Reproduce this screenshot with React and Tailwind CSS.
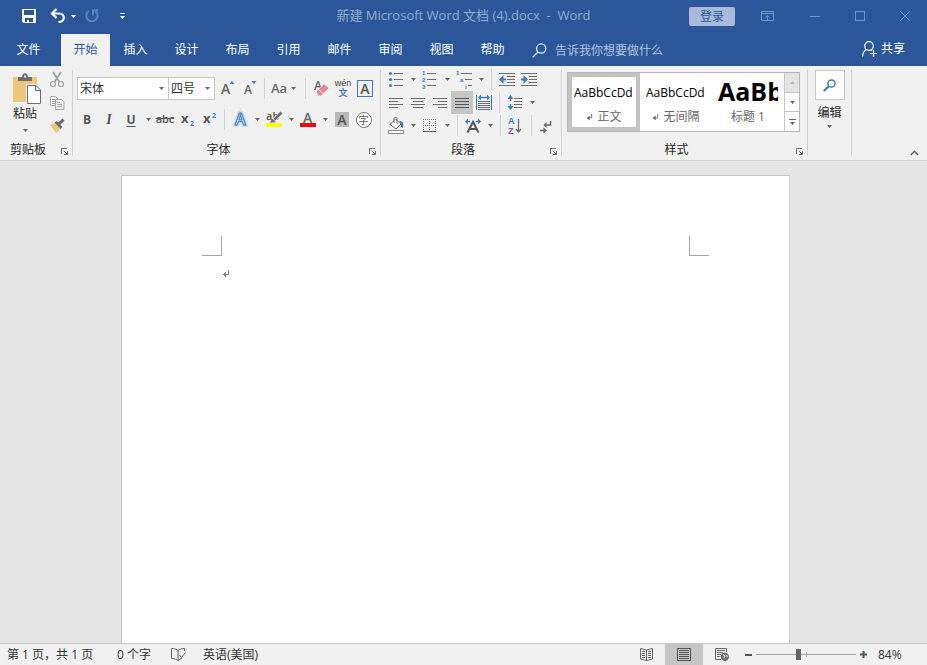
import React, { useState } from 'react';

const tabs = ['插入', '设计', '布局', '引用', '邮件', '审阅', '视图', '帮助'];

const Caret = () => (
  <svg className="w-[5px] h-[3px] shrink-0" viewBox="0 0 5 3" fill="currentColor">
    <path d="M0 0h5L2.5 3z" />
  </svg>
);

const Drop = ({ label }) => (
  <button type="button" aria-label={label} className="w-3 h-[23px] flex items-center justify-center text-[#666]">
    <Caret />
  </button>
);

const Tool = ({ label, active, children }) => (
  <button
    type="button"
    aria-label={label}
    title={label}
    className={`w-[22px] h-[23px] flex items-center justify-center shrink-0 ${active ? 'bg-[#c5c5c5]' : 'hover:bg-[#d5d5d5]'}`}
  >
    {children}
  </button>
);

const Icon = ({ children }) => (
  <svg className="w-4 h-[17px] overflow-visible" viewBox="0 0 16 17" fill="none">
    {children}
  </svg>
);

// horizontal rules given as [x, y, width]
const Lines = ({ rows, color = '#6d6d6d' }) => (
  <g fill={color} shapeRendering="crispEdges">
    {rows.map(([x, y, w]) => (
      <rect key={`${x}-${y}`} x={x} y={y} width={w} height="1" />
    ))}
  </g>
);

const Divider = () => <div className="w-px h-[21px] mx-1 bg-[#d2d2d2] shrink-0" />;

const GroupLine = () => <div className="w-px my-1 bg-[#d2d2d2] shrink-0" />;

const Launcher = ({ label }) => (
  <button type="button" aria-label={label} className="w-4 h-[23px] flex items-center justify-center pt-1.5">
    <svg className="w-[7px] h-[7px]" viewBox="0 0 7 7" stroke="#777" fill="none" shapeRendering="crispEdges">
      <path d="M0 .5h6M.5 0v6M3 3l3 3M6.5 3v4M3 6.5h4" />
    </svg>
  </button>
);

const Group = ({ label, className, children }) => (
  <section aria-label={label} className={`flex flex-col pt-0.5 shrink-0 ${className}`}>
    <div className="h-[69px]">{children}</div>
    <div className="h-[23px] flex items-center">
      <span className="flex-1 pt-0.5 text-center">{label}</span>
      <Launcher label={`${label}设置`} />
    </div>
  </section>
);

const ReturnMark = ({ className }) => (
  <svg className={className} viewBox="0 0 8 8" fill="none" stroke="currentColor">
    <path d="M6.5 0v4.5H1M3.5 2.5v4" />
    <path d="M4 2L1 4.5 4 7z" fill="currentColor" stroke="none" />
  </svg>
);

const TitleBar = () => (
  <header className="h-8 grid grid-cols-[1fr_auto_1fr] items-center">
    <div className="flex items-center gap-3 pl-[21px] text-white">
      <button type="button" aria-label="保存" className="w-4 h-6 flex items-center justify-center">
        <svg className="w-3.5 h-3.5" viewBox="0 0 14 14" fill="currentColor" shapeRendering="crispEdges">
          <path fillRule="evenodd" d="M0 0h14v14H1L0 13zM2 1v5h10V1zM3 9v4h2v-2h2v2h4V9z" />
        </svg>
      </button>
      <div className="flex items-center">
        <button type="button" aria-label="撤消" className="w-[18px] h-6 flex items-center justify-center">
          <svg className="w-4 h-4" viewBox="0 0 16 16" fill="none" stroke="currentColor" strokeWidth="2.2">
            <path d="M6.500 1L2 5.500 6.500 10M2.500 5.500H9c6.500 0 6.500 8.500-.5 8.500" />
          </svg>
        </button>
        <button type="button" aria-label="撤消列表" className="w-3 h-6 flex items-center justify-center">
          <Caret />
        </button>
        <button type="button" aria-label="恢复" className="w-[26px] h-6 flex items-center justify-center text-[#5f82b7]">
          <svg className="w-4 h-4" viewBox="0 0 16 16" fill="none" stroke="currentColor" strokeWidth="2">
            <path d="M5 3a5.600 5.600 0 1 0 6.500.5M9 7.500V2.200h5" />
          </svg>
        </button>
      </div>
      <button type="button" aria-label="自定义快速访问工具栏" className="w-2.5 h-6 flex items-center justify-center">
        <svg className="w-[7px] h-[7px]" viewBox="0 0 7 7" fill="currentColor">
          <path d="M1 0h5v1H1zM1 3h5L3.500 6z" />
        </svg>
      </button>
    </div>
    <h1 className="text-[13px] text-[#94add3] whitespace-pre">新建 Microsoft Word 文档 (4).docx  -  Word</h1>
    <div className="flex items-center justify-end text-[#7794c4]">
      <button type="button" className="w-[46px] h-[19px] mr-3 rounded-xs bg-[#a9bbd9] text-[#2b579a] leading-[19px]">
        登录
      </button>
      <button type="button" aria-label="功能区显示选项" className="w-[45px] h-8 pr-1 flex items-center justify-center">
        <svg className="w-[13px] h-[11px]" viewBox="0 0 13 11" fill="none" stroke="currentColor">
          <path d="M.5.5h12v9H.5zM0 2.500h13M6.500 9V4.500M4.500 6.500l2-2 2 2" />
        </svg>
      </button>
      <button type="button" aria-label="最小化" className="w-[45px] h-8 flex items-center justify-center">
        <span className="w-2.5 h-px bg-current" />
      </button>
      <button type="button" aria-label="最大化" className="w-[45px] h-8 flex items-center justify-center">
        <span className="w-2.5 h-2.5 border border-current" />
      </button>
      <button type="button" aria-label="关闭" className="w-[45px] h-8 flex items-center justify-center">
        <svg className="w-2.5 h-2.5" viewBox="0 0 10 10" stroke="currentColor">
          <path d="M0 0l10 10M10 0L0 10" />
        </svg>
      </button>
    </div>
  </header>
);

const TabBar = () => (
  <nav className="h-[34px] flex items-end text-white">
    <button type="button" className="w-[61px] h-8 pr-1">文件</button>
    <button type="button" className="w-[49px] h-8 bg-[#f1f1f1] text-[#2b579a]">开始</button>
    {tabs.map((tab) => (
      <button key={tab} type="button" className="w-[51px] h-8">{tab}</button>
    ))}
    <label className="h-8 pl-3.5 flex items-center gap-2">
      <svg className="w-[15px] h-[15px]" viewBox="0 0 15 15" fill="none" stroke="#dfe7f3" strokeWidth="1.3">
        <circle cx="9.200" cy="5.500" r="4.600" />
        <path d="M6 9L.7 14.300" />
      </svg>
      <input
        type="text"
        aria-label="操作说明搜索"
        placeholder="告诉我你想要做什么"
        className="w-[120px] h-6 bg-transparent outline-none placeholder:text-[#b3c4e0]"
      />
    </label>
    <button type="button" className="ml-auto mr-[22px] h-8 pb-0.5 flex items-center gap-1">
      <svg className="w-[15px] h-4" viewBox="0 0 15 16" fill="none" stroke="currentColor" strokeWidth="1.2">
        <circle cx="7" cy="5" r="4.300" />
        <path d="M4.500 8.600C2 10 .8 12 .6 15.500M9 8.800l1 .7M11.500 9v7M8 12.500h7" />
      </svg>
      共享
    </button>
  </nav>
);

const Clipboard = () => (
  <Group label="剪贴板" className="w-[72px]">
    <div className="flex">
      <button type="button" className="w-[46px] h-[69px] pt-[5px] pl-2 flex flex-col items-center">
        <svg className="w-7 h-[31px] shrink-0" viewBox="0 0 28 31" fill="none">
          <path d="M0 4h24v25H0z" fill="#eec77f" />
          <path d="M5 8V4h4c0-5 6-5 6 0h4v4z" fill="#6d6d6d" />
          <rect x="11" y="2.500" width="2" height="2" fill="#f1f1f1" />
          <path d="M13 11h11v4h4v16H13z" fill="#f1f1f1" />
          <path d="M14.500 12.500h8.500l4.500 4.500v13.500h-13z" fill="#fff" stroke="#6d6d6d" />
          <path d="M22.500 12.500v5h5" stroke="#6d6d6d" />
        </svg>
        <span className="h-[19px] leading-[19px] pr-1">粘贴</span>
        <span className="h-2.5 pr-1 flex items-center pt-1 text-[#666]"><Caret /></span>
      </button>
      <div>
        <Tool label="剪切">
          <Icon>
            <g stroke="#a0a0a0" strokeWidth="1.2">
              <circle cx="4" cy="13" r="2.500" />
              <circle cx="12" cy="13" r="2.500" />
              <path d="M4 1l6.500 10M12 1L5.500 11" strokeWidth="1.800" />
            </g>
          </Icon>
        </Tool>
        <Tool label="复制">
          <Icon>
            <g stroke="#a8a8a8" fill="#f1f1f1">
              <path d="M1.500 2.500h5l2 2v7h-7z" />
              <path d="M3 5.500h3M3 7.500h3M3 9.500h3" />
              <path d="M6.500 5.500h6l2.500 2.500v7.500H6.500z" />
              <path d="M8 8.500h3M8 10.500h5M8 12.500h5" />
            </g>
          </Icon>
        </Tool>
        <Tool label="格式刷">
          <Icon>
            <path d="M1 8l5-2 6 6-5 4z" fill="#eec77f" />
            <path d="M5.500 5.500l2-1.500 6 6-2 2z" fill="#6d6d6d" />
            <path d="M10 7l4.500-4.500" stroke="#6d6d6d" strokeWidth="3" />
          </Icon>
        </Tool>
      </div>
    </div>
  </Group>
);

const Combo = ({ label, className, options }) => (
  <div className={`relative ${className}`}>
    <select
      aria-label={label}
      className="appearance-none w-full h-[23px] pl-0.5 bg-white border border-[#c6c6c6] text-[#333] outline-none"
    >
      {options.map((o) => (
        <option key={o}>{o}</option>
      ))}
    </select>
    <span className="absolute right-[5px] top-2.5 text-[#666] pointer-events-none"><Caret /></span>
  </div>
);

const FontGroup = () => (
  <Group label="字体" className="w-[307px]">
    <div className="pt-[9px] pl-[3px] flex flex-col gap-2 text-[#555]">
      <div className="flex items-center">
        <div className="w-[140px] px-px flex">
          <Combo label="字体" className="w-[92px]" options={['宋体', '黑体', '楷体']} />
          <Combo label="字号" className="w-[47px] -ml-px" options={['四号', '小四', '五号']} />
        </div>
        <Tool label="增大字号">
          <Icon>
            <text x="2" y="14" fontSize="14" fontWeight="600" fill="#666">A</text>
            <path d="M10.500 4h5L13 1z" fill="#3f7ab8" />
          </Icon>
        </Tool>
        <Tool label="减小字号">
          <Icon>
            <text x="3" y="14" fontSize="12" fontWeight="600" fill="#666">A</text>
            <path d="M10.500 1h5L13 4z" fill="#3f7ab8" />
          </Icon>
        </Tool>
        <Divider />
        <button type="button" aria-label="更改大小写" className="w-8 h-[23px] pl-0.5 flex items-center gap-1 text-[#666]">
          <span className="text-[13px] font-semibold">Aa</span>
          <Caret />
        </button>
        <Divider />
        <Tool label="清除所有格式">
          <Icon>
            <text x="1" y="10" fontSize="12" fontWeight="600" fill="#666">A</text>
            <path d="M3 12l8-8 5 4-8 8H6z" fill="#e8849a" stroke="#f1f1f1" strokeWidth=".6" />
            <path d="M5.500 9.500l5 4.500" stroke="#f6e5e8" />
          </Icon>
        </Tool>
        <Tool label="拼音指南">
          <Icon>
            <text x="8" y="6" fontSize="9" textAnchor="middle" fill="#444" className="font-['Liberation_Sans',sans-serif]">wén</text>
            <text x="8" y="16" fontSize="9" fontWeight="700" textAnchor="middle" fill="#3f7ab8" className="font-['Noto_Sans_CJK_SC',sans-serif]">文</text>
          </Icon>
        </Tool>
        <Tool label="字符边框">
          <span className="w-4 h-[17px] border border-[#3f7ab8] text-sm leading-[15px] font-semibold">A</span>
        </Tool>
      </div>
      <div className="flex items-center">
        <Tool label="加粗"><span className="font-bold">B</span></Tool>
        <Tool label="倾斜"><span className="italic font-semibold font-['Liberation_Serif',serif] text-sm">I</span></Tool>
        <Tool label="下划线"><span className="font-bold underline underline-offset-2">U</span></Tool>
        <Drop label="下划线样式" />
        <Tool label="删除线"><span className="text-[11px] font-semibold line-through">abc</span></Tool>
        <Tool label="下标">
          <Icon>
            <text x="2" y="12" fontSize="13" fontWeight="700" fill="#555">x</text>
            <text x="11" y="15" fontSize="7" fontWeight="700" fill="#3f7ab8">2</text>
          </Icon>
        </Tool>
        <Tool label="上标">
          <Icon>
            <text x="2" y="12" fontSize="13" fontWeight="700" fill="#555">x</text>
            <text x="11" y="7" fontSize="7" fontWeight="700" fill="#3f7ab8">2</text>
          </Icon>
        </Tool>
        <Divider />
        <Tool label="文本效果">
          <Icon>
            <text x="3" y="14" fontSize="16" fontWeight="600" fill="none" stroke="#c5dcf2" strokeWidth="4">A</text>
            <text x="3" y="14" fontSize="16" fontWeight="600" fill="#fff" stroke="#3f7ab8">A</text>
          </Icon>
        </Tool>
        <Drop label="文本效果样式" />
        <Tool label="文本突出显示颜色">
          <Icon>
            <text x="0" y="9" fontSize="11" fontWeight="600" fill="#555">ab</text>
            <path d="M8 9l7-7" stroke="#f1f1f1" strokeWidth="4" />
            <path d="M8.500 8.500l7-7" stroke="#6d6d6d" strokeWidth="2.500" />
            <path d="M4 12l2-4.500 4 3.500z" fill="#6d6d6d" />
            <rect y="12" width="16" height="4" fill="#ff0" />
          </Icon>
        </Tool>
        <Drop label="突出显示颜色列表" />
        <Tool label="字体颜色">
          <Icon>
            <text x="3" y="12" fontSize="14" fontWeight="600" fill="#666">A</text>
            <rect y="12" width="16" height="4" fill="#f00" />
          </Icon>
        </Tool>
        <Drop label="字体颜色列表" />
        <Tool label="字符底纹">
          <span className="w-3.5 h-[15px] bg-[#b9b9b9] text-sm leading-[15px] font-semibold">A</span>
        </Tool>
        <Tool label="带圈字符">
          <span className="w-4 h-4 shrink-0 rounded-full border border-[#777] bg-white text-[10px] leading-[14px] -indent-px">字</span>
        </Tool>
      </div>
    </div>
  </Group>
);

const ParagraphGroup = () => (
  <Group label="段落" className="w-[180px]">
    <div className="pl-1">
      <div className="flex items-center">
        <Tool label="项目符号">
          <Icon>
            <g fill="#3f7ab8">
              <circle cx="2.500" cy="2.500" r="1.500" />
              <circle cx="2.500" cy="8.500" r="1.500" />
              <circle cx="2.500" cy="14.500" r="1.500" />
            </g>
            <Lines rows={[[6, 2, 9], [6, 8, 9], [6, 14, 9]]} />
          </Icon>
        </Tool>
        <Drop label="项目符号库" />
        <Tool label="编号">
          <Icon>
            <g fill="#3f7ab8" fontSize="6" fontWeight="700" className="font-['Liberation_Sans',sans-serif]">
              <text x="0" y="4">1</text>
              <text x="0" y="11">2</text>
              <text x="0" y="18">3</text>
            </g>
            <Lines rows={[[5, 2, 9], [5, 8, 9], [5, 14, 9]]} />
          </Icon>
        </Tool>
        <Drop label="编号库" />
        <Tool label="多级列表">
          <Icon>
            <g fill="#3f7ab8" fontSize="6" fontWeight="700" className="font-['Liberation_Sans',sans-serif]">
              <text x="0" y="4">1</text>
              <text x="4" y="11">a</text>
              <text x="9" y="18">i</text>
            </g>
            <Lines rows={[[5, 2, 11], [9, 8, 7], [12, 14, 4]]} />
          </Icon>
        </Tool>
        <Drop label="列表库" />
        <Divider />
        <Tool label="减少缩进量">
          <Icon>
            <Lines rows={[[0, 2, 16], [8, 5, 8], [8, 8, 8], [8, 11, 8], [0, 14, 16]]} />
            <path d="M7 8.500H2" stroke="#3f7ab8" strokeWidth="2" />
            <path d="M4.500 4v9L0 8.500z" fill="#3f7ab8" />
          </Icon>
        </Tool>
        <Tool label="增加缩进量">
          <Icon>
            <Lines rows={[[0, 2, 16], [8, 5, 8], [8, 8, 8], [8, 11, 8], [0, 14, 16]]} />
            <path d="M0 8.500h5" stroke="#3f7ab8" strokeWidth="2" />
            <path d="M2.500 4v9L7 8.500z" fill="#3f7ab8" />
          </Icon>
        </Tool>
      </div>
      <div className="flex items-center">
        <Tool label="左对齐">
          <Icon><Lines rows={[[1, 4, 14], [1, 7, 9], [1, 10, 14], [1, 13, 9]]} /></Icon>
        </Tool>
        <Tool label="居中">
          <Icon><Lines rows={[[1, 4, 14], [3, 7, 10], [1, 10, 14], [3, 13, 10]]} /></Icon>
        </Tool>
        <Tool label="右对齐">
          <Icon><Lines rows={[[1, 4, 14], [6, 7, 9], [1, 10, 14], [6, 13, 9]]} /></Icon>
        </Tool>
        <Tool label="两端对齐" active>
          <Icon><Lines rows={[[1, 4, 14], [1, 7, 14], [1, 10, 14], [1, 13, 14]]} color="#555" /></Icon>
        </Tool>
        <Tool label="分散对齐">
          <Icon>
            <path d="M.5 1v15M15.500 1v15" stroke="#3f7ab8" />
            <path d="M4 3.500h8" stroke="#3f7ab8" strokeWidth="1.400" />
            <path d="M5 .5v6L2 3.500zM11 .5v6l3-3z" fill="#3f7ab8" />
            <Lines rows={[[2, 7, 12], [2, 9, 12], [2, 11, 12], [2, 13, 12], [2, 15, 12]]} color="#6d6d6d" />
          </Icon>
        </Tool>
        <Divider />
        <Tool label="行和段落间距">
          <Icon>
            <path d="M3.500 3v4M3.500 10v4" stroke="#3f7ab8" strokeWidth="1.500" />
            <path d="M.5 5h6l-3-4zM.5 12h6l-3 4z" fill="#3f7ab8" />
            <Lines rows={[[7, 4, 8], [7, 7, 8], [7, 10, 8], [7, 13, 8]]} />
          </Icon>
        </Tool>
        <Drop label="间距选项" />
      </div>
      <div className="flex items-center">
        <Tool label="底纹">
          <Icon>
            <path d="M2 7.500L7.500 2l5.500 5-5 5z" fill="#fff" stroke="#6d6d6d" />
            <path d="M6 6V1.500c0-1.500 3-1.500 3 0V7" stroke="#6d6d6d" />
            <path d="M11 4c4 0 5 2 4 7l-2-1V7z" fill="#3f7ab8" />
            <path d="M.5 13.500h15v3H.5z" fill="#fff" stroke="#8a8a8a" />
          </Icon>
        </Tool>
        <Drop label="底纹颜色" />
        <Tool label="边框">
          <Icon>
            <path d="M1.500 2v12M7.500 2v12M13.500 2v12M1 2.500h13M1 8.500h13" stroke="#777" strokeDasharray="1 1" shapeRendering="crispEdges" />
            <path d="M1 14.500h13" stroke="#555" shapeRendering="crispEdges" />
          </Icon>
        </Tool>
        <Drop label="边框样式" />
        <Divider />
        <Tool label="中文版式">
          <Icon>
            <path d="M2.500 15.500L8 5l5.500 10.500M5 12h6" stroke="#555" strokeWidth="2" />
            <path d="M5 4.500H2M11 4.500h3" stroke="#3f7ab8" strokeWidth="1.600" />
            <path d="M3 1.500v6L0 4.500zM13 1.500v6l3-3z" fill="#3f7ab8" />
          </Icon>
        </Tool>
        <Drop label="中文版式选项" />
        <Divider />
        <Tool label="排序">
          <Icon>
            <g fontSize="9" fontWeight="700" className="font-['Liberation_Sans',sans-serif]">
              <text x="0" y="7" fill="#3f7ab8">A</text>
              <text x="0" y="17" fill="#8a52b5">Z</text>
            </g>
            <path d="M10.500 2v13M8 12l2.500 3 2.500-3" stroke="#6d6d6d" strokeWidth="1.300" />
          </Icon>
        </Tool>
        <Divider />
        <Tool label="显示编辑标记">
          <Icon>
            <path d="M11.500 4v4H6M1 13.500h5" stroke="#666" strokeWidth="1.500" />
            <path d="M7.500 5v6l-3-3zM4.500 10.500v6l3.500-3z" fill="#666" />
          </Icon>
        </Tool>
      </div>
    </div>
  </Group>
);

const StyleCell = ({ name, mark, selected, heading }) => (
  <button
    type="button"
    className={`w-[72px] h-[58px] px-0.5 flex flex-col items-center border-4 ${selected ? 'border-[#c3c3c3]' : 'border-transparent'}`}
  >
    <span
      className={`w-[60px] h-[30px] shrink-0 overflow-hidden whitespace-nowrap text-left text-black ${
        heading ? 'text-[25px] leading-[28px] font-bold' : 'leading-[32px]'
      }`}
    >
      {heading ? 'AaBb' : 'AaBbCcDd'}
    </span>
    <span className="flex items-center gap-1 text-[#666] leading-5">
      {mark && <ReturnMark className="w-[7px] h-[7px]" />}
      {name}
    </span>
  </button>
);

const StylesGroup = () => (
  <Group label="样式" className="w-[245px]">
    <div className="pt-1 pl-[5px]">
      <div className="w-[233px] h-[60px] flex border border-[#b5b5b5] bg-white">
        <StyleCell name="正文" mark selected />
        <StyleCell name="无间隔" mark />
        <StyleCell name="标题 1" heading />
        <div className="flex-1 flex flex-col border-l border-[#c6c6c6] divide-y divide-[#c6c6c6] text-[#666]">
          <button type="button" aria-label="上一行" className="flex-1 flex items-center justify-center bg-[#e3e3e3] text-[#b5b5b5]">
            <span className="rotate-180"><Caret /></span>
          </button>
          <button type="button" aria-label="下一行" className="flex-1 flex items-center justify-center">
            <Caret />
          </button>
          <button type="button" aria-label="其他样式" className="flex-1 flex flex-col gap-0.5 items-center justify-center">
            <span className="w-[7px] h-px bg-current" />
            <Caret />
          </button>
        </div>
      </div>
    </div>
  </Group>
);

const Ribbon = () => (
  <div className="h-[95px] flex shrink-0 bg-[#f1f1f1] border-b border-[#d2d2d2]">
    <Clipboard />
    <GroupLine />
    <FontGroup />
    <GroupLine />
    <ParagraphGroup />
    <GroupLine />
    <StylesGroup />
    <GroupLine />
    <button type="button" className="w-[43px] pt-1 flex flex-col items-center shrink-0">
      <span className="w-[30px] h-[30px] flex items-center justify-center bg-white border border-[#c6c6c6]">
        <svg className="w-[13px] h-[13px]" viewBox="0 0 13 13" fill="none" stroke="#3f7ab8">
          <circle cx="8.500" cy="4.500" r="3.600" strokeWidth="1.500" />
          <path d="M5.800 7.200L.8 12" strokeWidth="2.200" />
        </svg>
      </span>
      <span className="h-[25px] leading-[25px]">编辑</span>
      <span className="text-[#666]"><Caret /></span>
    </button>
    <GroupLine />
    <button type="button" aria-label="折叠功能区" className="ml-auto mr-2 mb-1 self-end">
      <svg className="w-[9px] h-[6px]" viewBox="0 0 9 6" fill="none" stroke="#666" strokeWidth="1.600">
        <path d="M.8 5l3.700-3.700L8.200 5" />
      </svg>
    </button>
  </div>
);

const Document = () => (
  <main className="flex-1 min-h-0 overflow-hidden flex justify-center pt-[14px] pr-4 bg-[#e6e6e6]">
    <article className="w-[669px] px-20 pt-[60px] bg-white border border-b-0 border-[#c6c6c6]">
      <div className="flex justify-between">
        <span className="w-5 h-5 border-r border-b border-[#a6a6a6]" />
        <span className="w-5 h-5 border-l border-b border-[#a6a6a6]" />
      </div>
      <p className="px-5 pt-3.5 text-[#777]">
        <ReturnMark className="w-2 h-2" />
      </p>
    </article>
  </main>
);

const StatusBar = () => {
  const [zoom, setZoom] = useState(42);

  return (
    <footer className="h-[22px] flex items-center shrink-0 pl-[7px] bg-[#f1f1f1] border-t border-[#c6c6c6] text-[#333]">
      <span className="w-[110px]">第 1 页，共 1 页</span>
      <span className="w-[54px]">0 个字</span>
      <button type="button" aria-label="校对" className="w-8">
        <svg className="w-[15px] h-[13px]" viewBox="0 0 15 13" fill="none" stroke="#666">
          <path d="M7 2.500C5.500 1 3 .5.500.500v10c2.500 0 5 .5 6.500 2V2.500C8.500 1 11 .5 13.500.500V3M7 12.500c1-1 2.500-1.800 4-2M8.500 7l2 2.500 4-5" />
        </svg>
      </button>
      <span>英语(美国)</span>
      <div className="ml-auto h-full flex items-center">
        <button type="button" aria-label="阅读视图" className="w-[38px] h-full flex items-center justify-center">
          <svg className="w-[13px] h-[13px]" viewBox="0 0 13 13" fill="none" stroke="#666">
            <path d="M6.500 2v11M6.500 2L.5.500v10.500L6.500 12.500l6-1.500V.5zM2 3.500h3M2 5.500h3M2 7.500h3M2 9.500h3M8 3.500h3M8 5.500h3M8 7.500h3M8 9.500h3" />
          </svg>
        </button>
        <button type="button" aria-label="页面视图" className="w-[38px] h-full flex items-center justify-center bg-[#c5c5c5]">
          <svg className="w-3.5 h-[13px]" viewBox="0 0 14 13" fill="none" stroke="#555" shapeRendering="crispEdges">
            <path d="M.5.5h13v12H.5zM2 2.500h10M2 4.500h10M2 6.500h10M2 8.500h10M2 10.500h10" />
          </svg>
        </button>
        <button type="button" aria-label="Web 版式视图" className="w-[38px] h-full flex items-center justify-center">
          <svg className="w-3.5 h-[13px]" viewBox="0 0 14 13" fill="none" stroke="#666">
            <path d="M6 11.500H.5V.5h11V4M2 2.500h8M2 4.500h6M2 6.500h4M2 8.500h3" />
            <circle cx="9.800" cy="8.800" r="3.700" fill="#777" />
            <path d="M8 6.500l2 1.500-1 2M11.500 7l1 2" stroke="#eee" />
          </svg>
        </button>
        <button type="button" aria-label="缩小" className="w-[15px] h-full flex items-center justify-center">
          <span className="w-[7px] h-0.5 bg-[#555]" />
        </button>
        <input
          type="range"
          aria-label="缩放"
          value={zoom}
          onChange={(e) => setZoom(Number(e.target.value))}
          className="appearance-none w-[100px] h-3 bg-[linear-gradient(#a6a6a6,#a6a6a6),linear-gradient(#a6a6a6,#a6a6a6)] bg-no-repeat bg-center [background-size:100%_1px,1px_5px] [&::-webkit-slider-thumb]:appearance-none [&::-webkit-slider-thumb]:w-[5px] [&::-webkit-slider-thumb]:h-[11px] [&::-webkit-slider-thumb]:bg-[#666]"
        />
        <button type="button" aria-label="放大" className="w-3.5 h-full flex items-center justify-center">
          <svg className="w-[7px] h-[7px]" viewBox="0 0 7 7" stroke="#555" strokeWidth="2">
            <path d="M3.500 0v7M0 3.500h7" />
          </svg>
        </button>
        <span className="w-[57px] pl-2">84%</span>
      </div>
    </footer>
  );
};

const App = () => (
  <div className="h-screen flex flex-col overflow-hidden text-xs text-[#262626] font-['Open_Sans','Noto_Sans_CJK_SC',sans-serif]">
    <div className="shrink-0 bg-[#2b579a]">
      <TitleBar />
      <TabBar />
    </div>
    <Ribbon />
    <Document />
    <StatusBar />
  </div>
);

export default App;
